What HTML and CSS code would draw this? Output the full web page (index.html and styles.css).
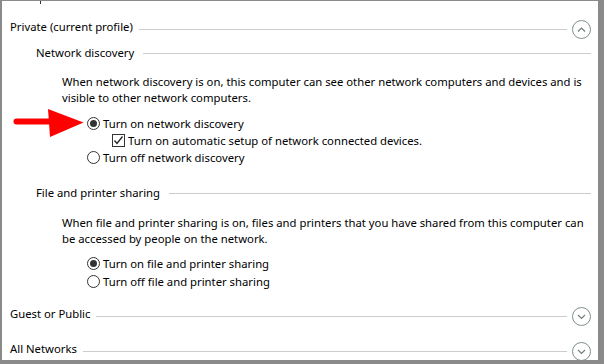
FILE: index.html
```html
<!DOCTYPE html>
<html lang="en">
  <head>
    <meta charset="UTF-8" />
    <meta name="viewport" content="width=device-width, initial-scale=1.0" />
    <title>Advanced sharing settings</title>
    <link rel="stylesheet" href="styles.css">
  </head>
  <body>
    <div class="window">
      <!-- bottom of the previous profile's text, scrolled off the top -->
      <div class="cut-off"></div>

      <!-- Private profile (expanded) -->
      <div class="profile-head first">
        <span class="profile-title">Private (current profile)</span>
        <span class="rule"></span>
        <span class="toggle">
          <svg width="19" height="19" viewBox="0 0 19 19">
            <circle cx="9.5" cy="9.5" r="9" fill="none" stroke="#7f8f89" stroke-width="1" />
            <polyline points="6,11.5 9.5,8 13,11.5" fill="none" stroke="#6f7f79" stroke-width="1.2" />
          </svg>
        </span>
      </div>

      <div class="section">
        <div class="section-head">
          <span>Network discovery</span>
          <span class="rule"></span>
        </div>
        <p class="desc">When network discovery is on, this computer can see other network computers and devices and is visible to other network computers.</p>
        <div class="options">
          <div class="option"><span class="radio checked"></span>Turn on network discovery</div>
          <div class="option nested"><span class="check checked">
            <svg width="11" height="11" viewBox="0 0 11 11">
              <polyline points="1.5,5.5 4,8.5 9.5,1.5" fill="none" stroke="#222" stroke-width="1.3" />
            </svg>
          </span>Turn on automatic setup of network connected devices.</div>
          <div class="option"><span class="radio"></span>Turn off network discovery</div>
        </div>
      </div>

      <div class="section sharing">
        <div class="section-head">
          <span>File and printer sharing</span>
          <span class="rule"></span>
        </div>
        <p class="desc">When file and printer sharing is on, files and printers that you have shared from this computer can be accessed by people on the network.</p>
        <div class="options spaced">
          <div class="option"><span class="radio checked"></span>Turn on file and printer sharing</div>
          <div class="option"><span class="radio"></span>Turn off file and printer sharing</div>
        </div>
      </div>

      <!-- Collapsed profiles -->
      <div class="profile-head guest">
        <span class="profile-title">Guest or Public</span>
        <span class="rule"></span>
        <span class="toggle">
          <svg width="19" height="19" viewBox="0 0 19 19">
            <circle cx="9.5" cy="9.5" r="9" fill="none" stroke="#7f8f89" stroke-width="1" />
            <polyline points="6,8 9.5,11.5 13,8" fill="none" stroke="#6f7f79" stroke-width="1.2" />
          </svg>
        </span>
      </div>

      <div class="profile-head all">
        <span class="profile-title">All Networks</span>
        <span class="rule"></span>
        <span class="toggle">
          <svg width="19" height="19" viewBox="0 0 19 19">
            <circle cx="9.5" cy="9.5" r="9" fill="none" stroke="#7f8f89" stroke-width="1" />
            <polyline points="6,8 9.5,11.5 13,8" fill="none" stroke="#6f7f79" stroke-width="1.2" />
          </svg>
        </span>
      </div>

      <!-- Red annotation arrow -->
      <svg class="arrow" width="74" height="30" viewBox="0 0 74 30">
        <line x1="5.5" y1="13.5" x2="40" y2="13.5" stroke="#f00" stroke-width="6" stroke-linecap="round" />
        <polygon points="37,1 72.5,14.5 39,29" fill="#f00" />
      </svg>
    </div>
  </body>
</html>
```

FILE: styles.css
```css
/* General styles */
html, body {
    margin: 0;
    padding: 0;
    background: #fff;
}

body {
    font-family: "Noto Sans", "Open Sans", sans-serif;
    font-size: 11.3px;
    line-height: 16px;
    color: #000;
}

/* Window frame */
.window {
    position: relative;
    box-sizing: border-box;
    width: 604px;
    height: 364px;
    overflow: hidden;
    background: #fff;
    border-style: solid;
    border-color: #8a8a8a;
    border-width: 1px 6px 4px 2px;
    padding: 0 7px 0 8px;
}

.cut-off {
    width: 1px;
    height: 3px;
    margin-left: 30px;
    background: #333;
}

/* Light horizontal rule after a heading */
.rule {
    flex: 1;
    height: 1px;
    background: #cccccc;
}

/* Profile headers (Private / Guest / All) */
.profile-head {
    display: flex;
    align-items: flex-start;
    height: 19px;
    margin-top: 16px;
}

.profile-head.guest {
    margin-top: 17px;
}

.profile-head .profile-title {
    margin-top: -1px;
    margin-right: 6px;
}

.profile-head .rule {
    margin-top: 9px;
}

.toggle {
    display: block;
    width: 19px;
    height: 19px;
    margin-left: 5px;
}

.toggle svg {
    display: block;
}

/* Sections inside a profile */
.section {
    padding-left: 26px;
}

.section-head {
    display: flex;
    align-items: center;
    height: 16px;
    margin-top: 6px;
}

.section-head span:first-child {
    margin-right: 9px;
}

.sharing .section-head {
    margin-top: 19px;
}

.desc {
    margin: 13px 0 0 26px;
}

.sharing .desc {
    margin-top: 14px;
}

/* Radio buttons and checkboxes */
.options {
    margin: 9px 0 0 51px;
}

.sharing .options {
    margin-top: 8px;
}

.options.spaced .option + .option {
    margin-top: 1px;
}

.option {
    display: flex;
    align-items: center;
    height: 17px;
    line-height: 17px;
}

.option.nested {
    margin-left: 25px;
}

.radio {
    box-sizing: border-box;
    width: 13px;
    height: 13px;
    margin-right: 3px;
    border: 1px solid #333;
    border-radius: 50%;
    display: flex;
    align-items: center;
    justify-content: center;
}

.radio.checked::after {
    content: "";
    width: 7px;
    height: 7px;
    border-radius: 50%;
    background: #333;
}

.check {
    box-sizing: border-box;
    width: 13px;
    height: 13px;
    margin-right: 3px;
    border: 1px solid #333;
}

.check svg {
    display: block;
}

/* Red pointer arrow drawn over the page */
.arrow {
    position: absolute;
    left: 9px;
    top: 107px;
}
```
